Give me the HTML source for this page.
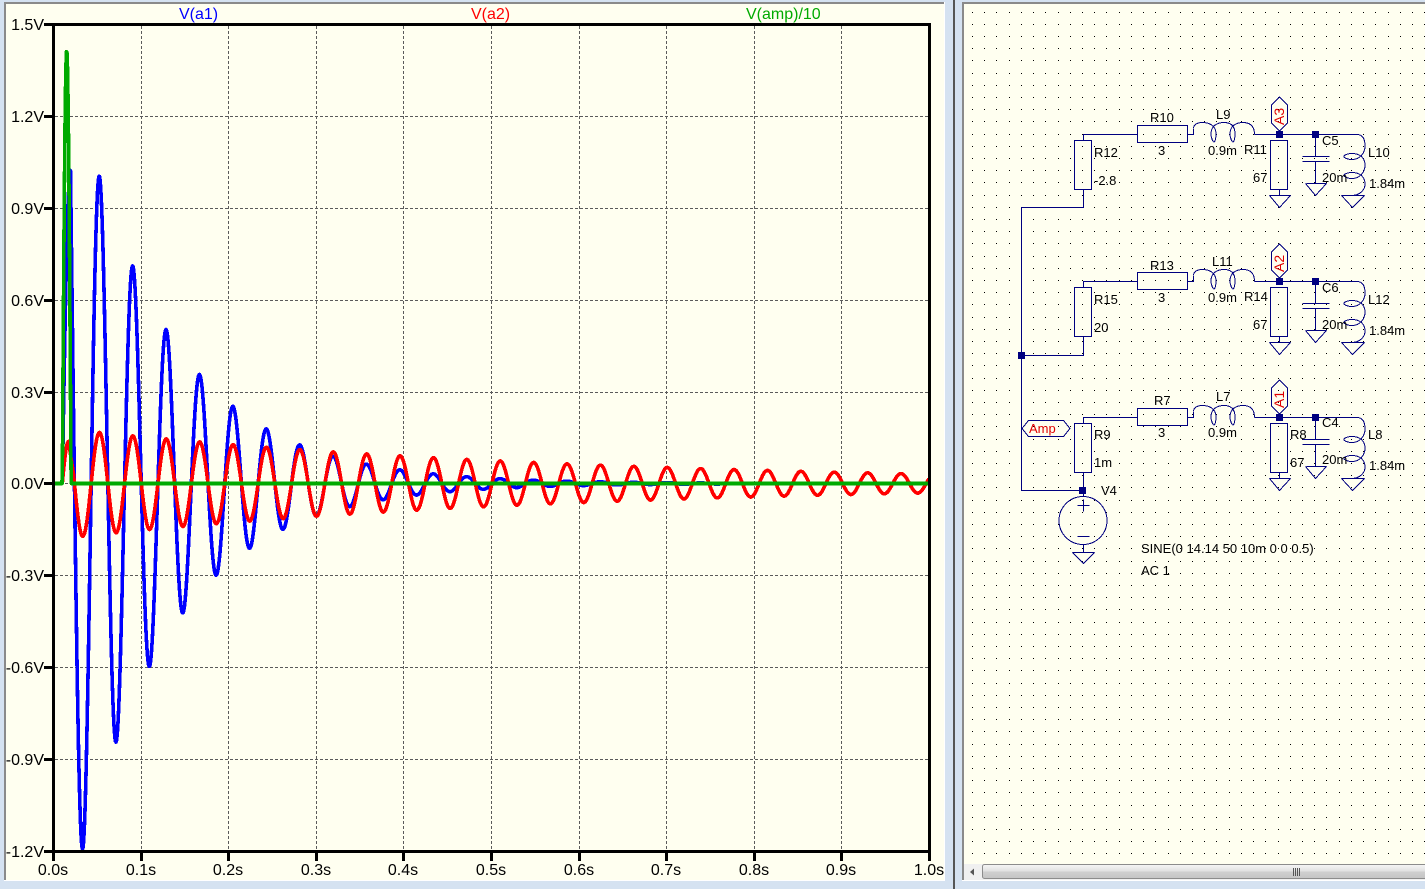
<!DOCTYPE html>
<html><head><meta charset="utf-8"><style>
html,body{margin:0;padding:0;width:1425px;height:889px;overflow:hidden;background:#d5e2f1}
svg{position:absolute;left:0;top:0;display:block}
text{font-family:"Liberation Sans",Arial,sans-serif}
.a{font-size:16px;fill:#000}
.s{font-size:13px;fill:#000}
.w{fill:none;stroke:#000080;stroke-width:1;shape-rendering:crispEdges}
.c{fill:none;stroke:#000080;stroke-width:1;shape-rendering:crispEdges}
.g{stroke:#5a5a5a;stroke-width:1;stroke-dasharray:3 2;shape-rendering:crispEdges}
.t{fill:none;stroke-width:3.6;stroke-linejoin:round;shape-rendering:crispEdges}
.k{fill:#000;shape-rendering:crispEdges}
</style></head><body>
<svg width="1425" height="889" viewBox="0 0 1425 889" xmlns="http://www.w3.org/2000/svg">
<defs>
<linearGradient id="th" x1="0" y1="0" x2="0" y2="1"><stop offset="0" stop-color="#f6f6f6"/><stop offset=".45" stop-color="#e2e2e2"/><stop offset=".55" stop-color="#cfcfcf"/><stop offset="1" stop-color="#c4c4c4"/></linearGradient>
<g id="br">
<path class="w" d="M1083.5 140.5V134.5H1137.5M1187.5 134.5H1193.5V128.5M1254.5 134.5H1357.5M1279.5 189.5V195.5M1315.5 134.5V156.5M1315.5 161.5V183.5"/>
<rect class="w" x="1074.5" y="140.5" width="17" height="49"/>
<rect class="w" x="1137.5" y="125.5" width="50" height="17"/>
<rect class="w" x="1270.5" y="140.5" width="17" height="49"/>
<path class="c" d="M1193.5 128C1194 124 1198 122.5 1202 122.5C1210 122.5 1216 126 1216 134C1216 138 1215 142 1214 142C1213 142 1211 138 1211 134C1211 126 1217 122.5 1224 122.5C1231 122.5 1235 126 1235 134C1235 138 1234 142 1233 142C1232 142 1230 138 1230 134C1230 126 1236 122.5 1243 122.5C1250 122.5 1254.5 126 1254.5 134.5"/>
<path class="c" d="M1357 134.5C1362 134.5 1365 138 1365 146C1365 153 1360 159.5 1352 159.5C1348 159.5 1344 158 1344 156.5C1344 155 1348 153.5 1352 153.5C1360 153.5 1365 158 1365 165C1365 172 1360 178.5 1352 178.5C1348 178.5 1344 177 1344 175.5C1344 174 1348 172.5 1352 172.5C1360 172.5 1365 177 1365 184C1365 190 1360 195 1352.5 195.5"/>
<path class="w" d="M1302.5 156.5H1329.5M1302.5 161.5H1329.5M1269.5 195.5H1290.5M1306.5 183.5H1326.5M1341.5 195.5H1364.5"/>
<path class="c" d="M1269.5 195.5L1279.5 207.5L1290.5 195.5M1305.5 183.5L1315.5 195.5L1326.5 183.5M1341.5 195.5L1352.5 207.5L1364.5 195.5"/>
<path class="c" d="M1279.5 97L1287.5 105V123L1279.5 131L1271.5 123V105Z"/>
<rect x="1276" y="131" width="7" height="7" fill="#000080"/>
<rect x="1312" y="131" width="7" height="7" fill="#000080"/>
</g>
</defs>

<!-- panes -->
<rect x="0" y="0" width="1425" height="889" fill="#d5e2f1"/>
<rect x="4" y="2" width="941" height="879" fill="#fff"/>
<rect x="4" y="2" width="940" height="878" fill="#fffff0"/>
<rect x="4" y="2" width="940" height="2" fill="#8a8a8a"/>
<rect x="4" y="2" width="2" height="878" fill="#8a8a8a"/>
<rect x="953" y="0" width="2" height="889" fill="#555"/>
<rect x="962" y="2" width="463" height="879" fill="#fff"/>
<rect x="962" y="2" width="463" height="878" fill="#fffff0"/>
<rect x="962" y="2" width="463" height="2" fill="#8a8a8a"/>
<rect x="962" y="2" width="2" height="878" fill="#8a8a8a"/>

<!-- grid -->
<g class="g">
<line x1="141.5" y1="26" x2="141.5" y2="850"/><line x1="228.5" y1="26" x2="228.5" y2="850"/><line x1="316.5" y1="26" x2="316.5" y2="850"/><line x1="403.5" y1="26" x2="403.5" y2="850"/><line x1="491.5" y1="26" x2="491.5" y2="850"/><line x1="579.5" y1="26" x2="579.5" y2="850"/><line x1="666.5" y1="26" x2="666.5" y2="850"/><line x1="754.5" y1="26" x2="754.5" y2="850"/><line x1="841.5" y1="26" x2="841.5" y2="850"/>
<line x1="55" y1="116.5" x2="928" y2="116.5"/><line x1="55" y1="208.5" x2="928" y2="208.5"/><line x1="55" y1="300.5" x2="928" y2="300.5"/><line x1="55" y1="392.5" x2="928" y2="392.5"/><line x1="55" y1="483.5" x2="928" y2="483.5"/><line x1="55" y1="575.5" x2="928" y2="575.5"/><line x1="55" y1="667.5" x2="928" y2="667.5"/><line x1="55" y1="759.5" x2="928" y2="759.5"/>
</g>

<!-- traces -->
<path id="tb" class="t" stroke="#0000ff" d="M53 483.5H62"/>
<path id="tr" class="t" stroke="#ff0000" d="M53 483.5H62"/>
<path id="tg" class="t" stroke="#00aa00" d="M53 483.5H929"/>

<!-- axes -->
<g class="k">
<rect x="52" y="23" width="879" height="3"/><rect x="52" y="850" width="879" height="3"/>
<rect x="52" y="23" width="3" height="830"/><rect x="928" y="23" width="3" height="830"/>
<rect x="44" y="23" width="8" height="3"/><rect x="44" y="115" width="8" height="3"/><rect x="44" y="207" width="8" height="3"/><rect x="44" y="299" width="8" height="3"/><rect x="44" y="391" width="8" height="3"/><rect x="44" y="482" width="8" height="3"/><rect x="44" y="574" width="8" height="3"/><rect x="44" y="666" width="8" height="3"/><rect x="44" y="758" width="8" height="3"/><rect x="44" y="850" width="8" height="3"/>
<rect x="52" y="853" width="3" height="8"/><rect x="140" y="853" width="3" height="8"/><rect x="227" y="853" width="3" height="8"/><rect x="315" y="853" width="3" height="8"/><rect x="402" y="853" width="3" height="8"/><rect x="490" y="853" width="3" height="8"/><rect x="578" y="853" width="3" height="8"/><rect x="665" y="853" width="3" height="8"/><rect x="753" y="853" width="3" height="8"/><rect x="840" y="853" width="3" height="8"/><rect x="928" y="853" width="3" height="8"/>
</g>
<g class="a" text-anchor="end">
<text x="44" y="30">1.5V</text><text x="44" y="122">1.2V</text><text x="44" y="214">0.9V</text><text x="44" y="306">0.6V</text><text x="44" y="398">0.3V</text><text x="44" y="489">0.0V</text><text x="44" y="581">-0.3V</text><text x="44" y="673">-0.6V</text><text x="44" y="765">-0.9V</text><text x="44" y="857">-1.2V</text>
</g>
<g class="a" text-anchor="middle">
<text x="53" y="875">0.0s</text><text x="141" y="875">0.1s</text><text x="228" y="875">0.2s</text><text x="316" y="875">0.3s</text><text x="403" y="875">0.4s</text><text x="491" y="875">0.5s</text><text x="579" y="875">0.6s</text><text x="666" y="875">0.7s</text><text x="754" y="875">0.8s</text><text x="841" y="875">0.9s</text><text x="929" y="875">1.0s</text>
</g>
<text x="179" y="19" font-size="16" fill="#0000ff">V(a1)</text>
<text x="471" y="19" font-size="16" fill="#ff0000">V(a2)</text>
<text x="746" y="19" font-size="16" fill="#00aa00">V(amp)/10</text>

<!-- schematic -->
<g id="dots" fill="#000" shape-rendering="crispEdges"></g>
<use href="#br"/>
<use href="#br" y="147"/>
<use href="#br" y="283"/>
<path class="w" d="M1083.5 189.5V207.5H1021.5V490.5H1083.5M1083.5 336.5V355.5H1021.5M1083.5 472.5V496.5M1083.5 544.5V552.5M1077.5 505.5H1089.5M1083.5 499.5V511.5M1077.5 536.5H1089.5M1072.5 552.5H1094.5"/>
<circle class="c" cx="1083" cy="520.5" r="24"/>
<path class="c" d="M1072.5 552.5L1083.5 563.5L1094.5 552.5"/>
<rect x="1018" y="352" width="7" height="7" fill="#000080"/>
<rect x="1079" y="487" width="7" height="7" fill="#000080"/>
<path class="c" d="M1022 428.5L1028.5 420.5H1063.5L1070 428.5L1063.5 436.5H1028.5Z"/>
<text x="1029" y="433" font-size="13" fill="#e00000">Amp</text>
<text transform="translate(1284,125) rotate(-90)" font-size="14" fill="#e00000">A3</text>
<text transform="translate(1284,272) rotate(-90)" font-size="14" fill="#e00000">A2</text>
<text transform="translate(1284,408) rotate(-90)" font-size="14" fill="#e00000">A1</text>
<g class="s">
<text x="1150" y="122">R10</text><text x="1158" y="155">3</text><text x="1216" y="119">L9</text><text x="1208" y="155">0.9m</text><text x="1244" y="154">R11</text><text x="1253" y="182">67</text><text x="1322" y="145">C5</text><text x="1322" y="182">20m</text><text x="1368" y="157">L10</text><text x="1369" y="188">1.84m</text><text x="1094" y="157">R12</text><text x="1094" y="185">-2.8</text>
<text x="1150" y="270">R13</text><text x="1158" y="302">3</text><text x="1212" y="266">L11</text><text x="1208" y="302">0.9m</text><text x="1244" y="301">R14</text><text x="1253" y="329">67</text><text x="1322" y="292">C6</text><text x="1322" y="329">20m</text><text x="1368" y="304">L12</text><text x="1369" y="335">1.84m</text><text x="1094" y="304">R15</text><text x="1094" y="332">20</text>
<text x="1154" y="405">R7</text><text x="1158" y="437">3</text><text x="1216" y="401">L7</text><text x="1208" y="437">0.9m</text><text x="1290" y="439">R8</text><text x="1290" y="467">67</text><text x="1322" y="427">C4</text><text x="1322" y="464">20m</text><text x="1368" y="439">L8</text><text x="1369" y="470">1.84m</text><text x="1094" y="439">R9</text><text x="1094" y="467">1m</text><text x="1101" y="495">V4</text>
<text x="1141" y="553">SINE(0 14.14 50 10m 0 0 0.5)</text><text x="1141" y="575">AC 1</text>
</g>

<!-- scrollbar -->
<rect x="964" y="864" width="461" height="16" fill="#f0f0f0"/>
<rect x="982.5" y="864.5" width="460" height="14" rx="2" fill="url(#th)" stroke="#8c8c8c"/>
<path d="M974 868.5V875.5L970 872Z" fill="#555"/>
<path d="M1293.5 868V876M1295.5 868V876M1297.5 868V876M1299.5 868V876" stroke="#555" stroke-width="1" shape-rendering="crispEdges"/>
</svg>
<script>
(function(){
var P=33.4,Y0=483.5,T=2*Math.PI,X0=99.5;
function blue(x){
  var f=function(x){return 307*Math.exp(-(x-X0)/96.6)*Math.cos(T*(x-X0)/P)};
  if(x<62.3)return 0;
  if(x<70.5)return 313*Math.sin(Math.PI/2*(x-62.3)/8.2);
  if(x<73.5){return 313+(f(73.5)-313)*(x-70.5)/3}
  return f(x);
}
function red(x){
  var f=function(x){return 51*Math.exp(-(x-X0)/490)*Math.cos(T*(x-X0)/P)};
  if(x<62.3)return 0;
  if(x<68.5)return 42*Math.sin(Math.PI/2*(x-62.3)/6.2);
  if(x<73.5){return 42+(f(73.5)-42)*(x-68.5)/5}
  return f(x);
}
function green(x){
  if(x<62.3||x>71.1)return 0;
  return 433*Math.sin(Math.PI*(x-62.3)/8.8);
}
function build(fn){
  var d="M53 "+Y0;
  for(var x=53;x<=929;x+=0.5){d+="L"+x+" "+(Y0-fn(x)).toFixed(1)}
  return d;
}
document.getElementById('tb').setAttribute('d',build(blue));
document.getElementById('tr').setAttribute('d',build(red));
document.getElementById('tg').setAttribute('d',build(green));
var ns="http://www.w3.org/2000/svg",g=document.getElementById('dots');
var d="";
for(var i=-9;i<29;i++){
  var px=Math.round(1082+i*12.22);
  for(var j=-10;j<60;j++){
    var py=Math.round(133.5+j*12.2);
    if(py<8||py>862||px>1424||px<966)continue;
    d+="M"+px+" "+py+"h1v1h-1z";
  }
}
var p=document.createElementNS(ns,'path');p.setAttribute('d',d);g.appendChild(p);
})();
</script>
</body></html>
